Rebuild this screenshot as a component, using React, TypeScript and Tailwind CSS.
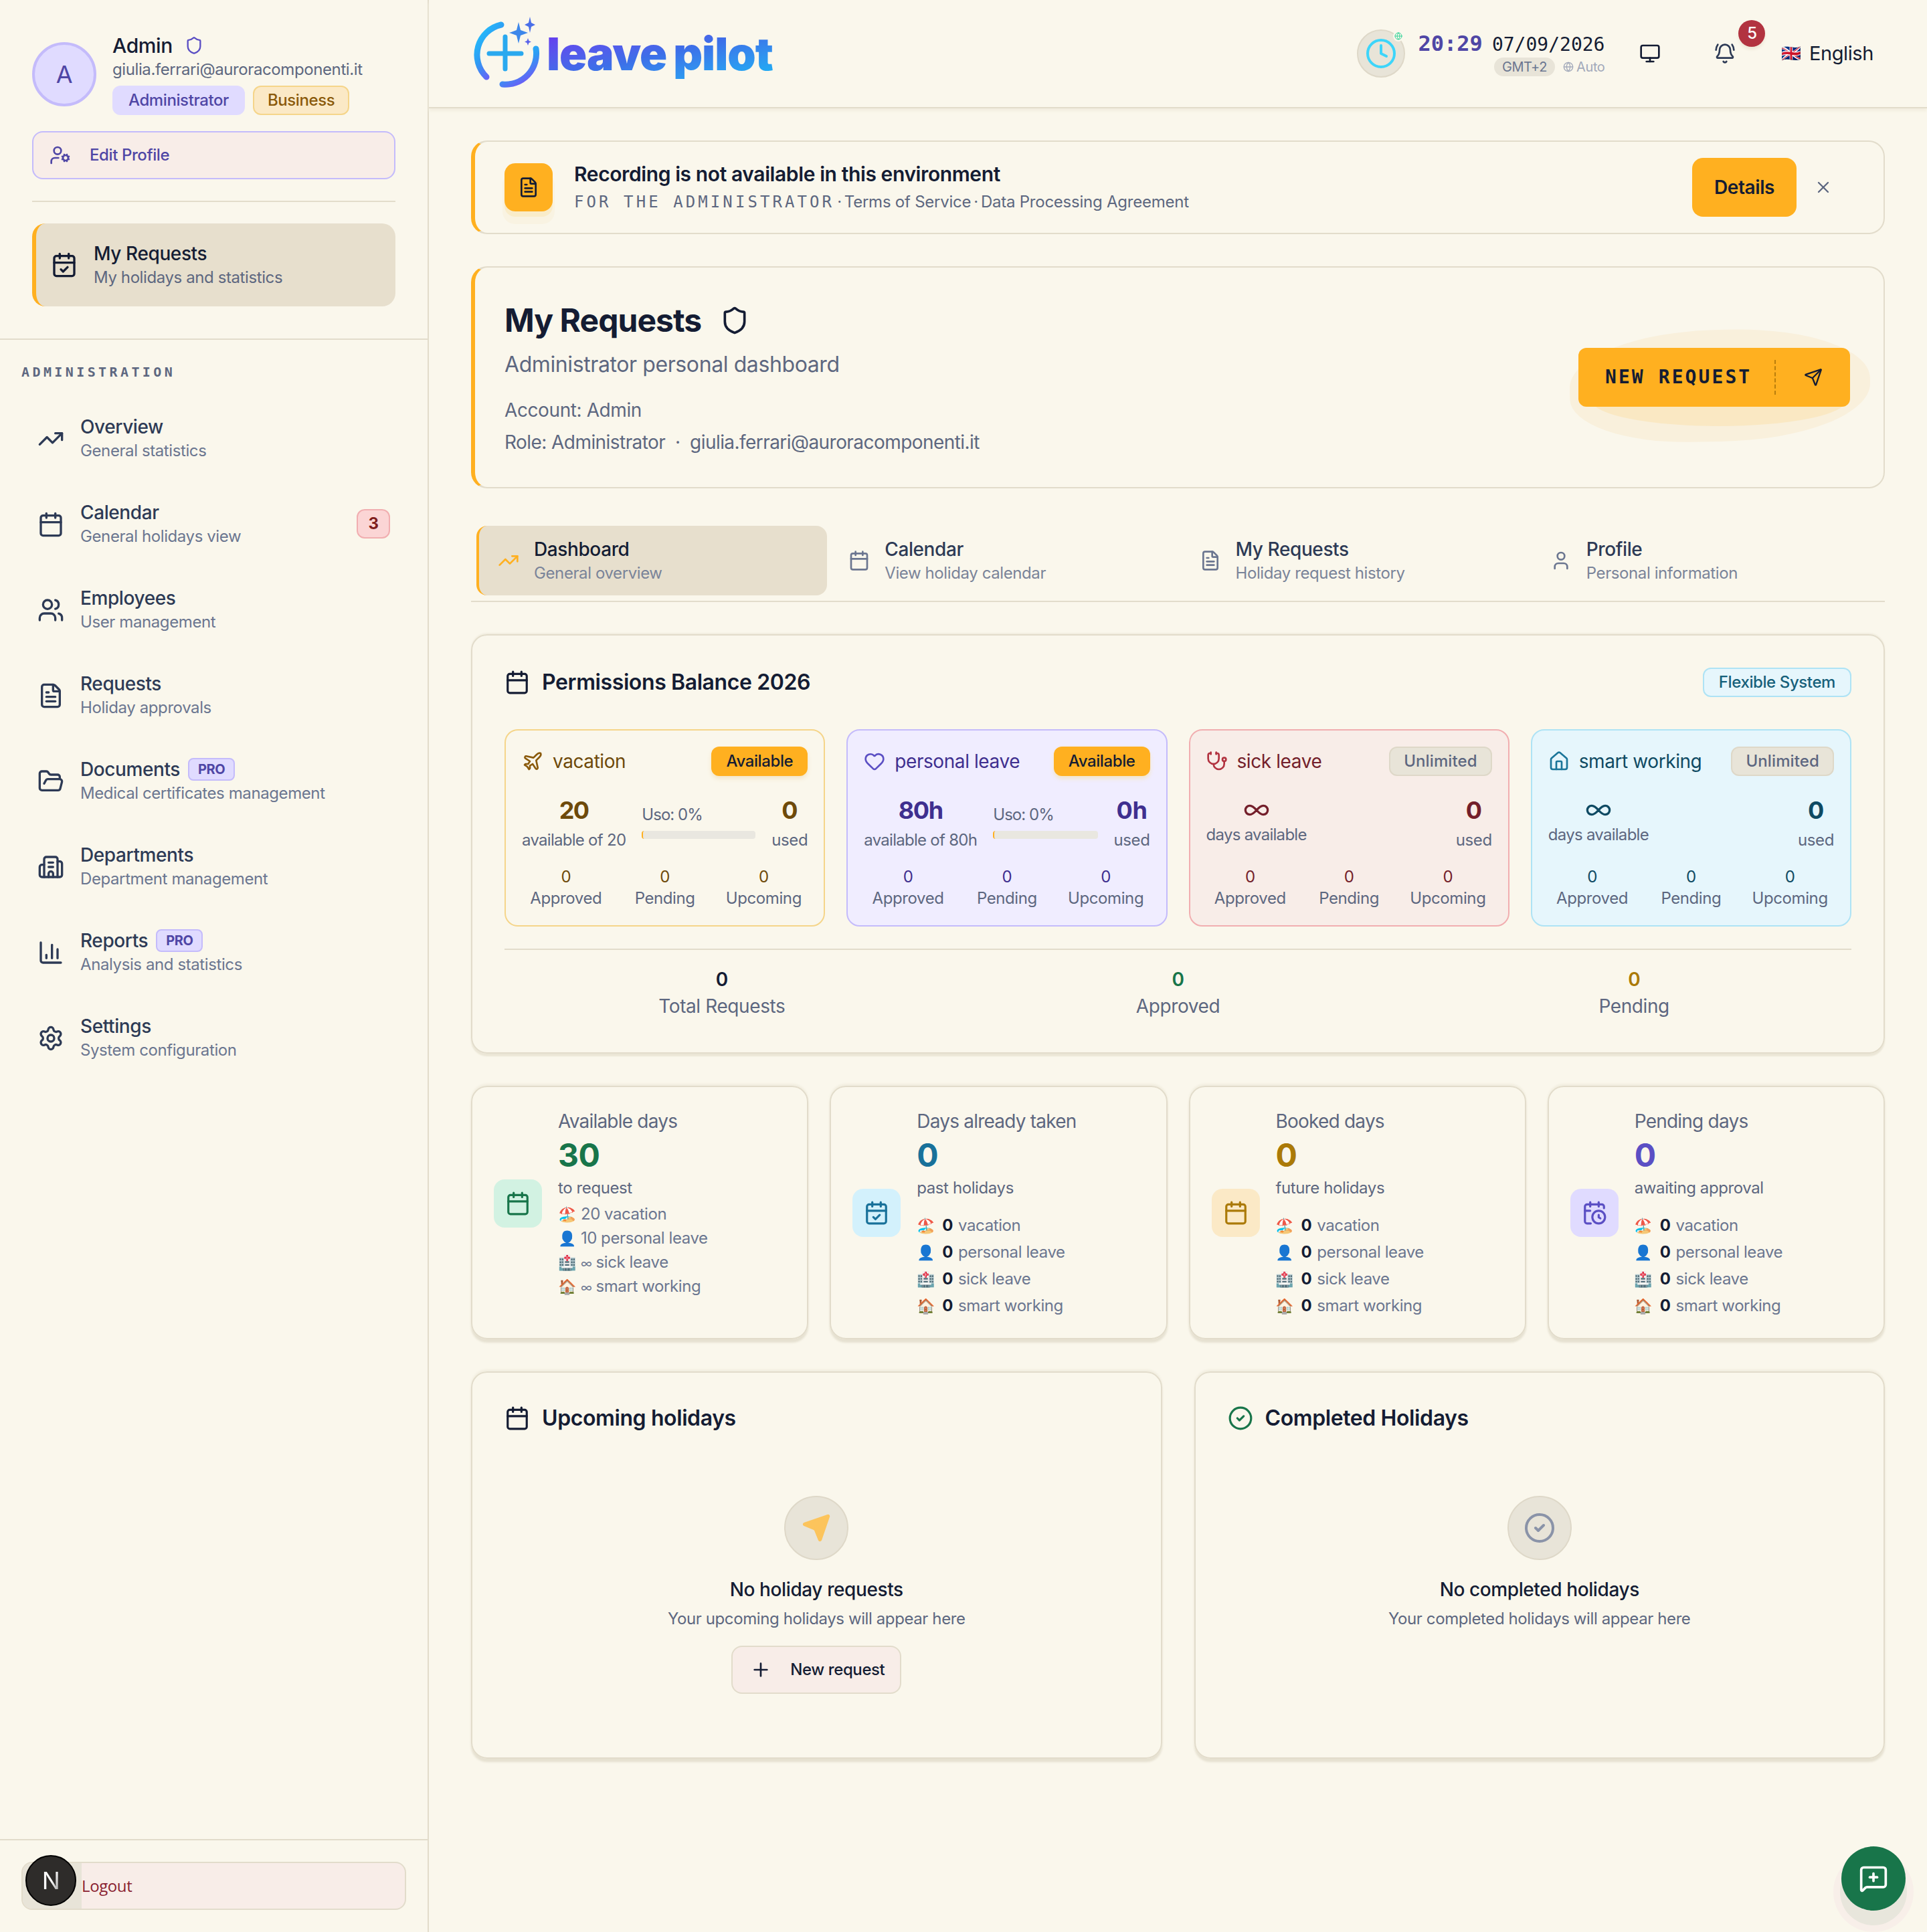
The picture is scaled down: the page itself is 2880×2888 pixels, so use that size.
import {
  Shield, UserCog, CalendarCheck, TrendingUp, Calendar, Users, FileText, FolderOpen, Building2,
  ChartColumn, Settings, Plane, Heart, Stethoscope, House, Infinity as InfinityIcon, Monitor,
  BellRing, Globe, Clock, X, Send, Plus, CircleCheck, MessageSquarePlus, LogOut, User, CalendarClock,
} from "lucide-react";

const navItems = [
  { icon: TrendingUp, title: "Overview", sub: "General statistics" },
  { icon: Calendar, title: "Calendar", sub: "General holidays view", count: "3" },
  { icon: Users, title: "Employees", sub: "User management" },
  { icon: FileText, title: "Requests", sub: "Holiday approvals" },
  { icon: FolderOpen, title: "Documents", sub: "Medical certificates management", pro: true },
  { icon: Building2, title: "Departments", sub: "Department management" },
  { icon: ChartColumn, title: "Reports", sub: "Analysis and statistics", pro: true },
  { icon: Settings, title: "Settings", sub: "System configuration" },
];

const tabs = [
  { icon: TrendingUp, title: "Dashboard", sub: "General overview", active: true },
  { icon: Calendar, title: "Calendar", sub: "View holiday calendar" },
  { icon: FileText, title: "My Requests", sub: "Holiday request history" },
  { icon: User, title: "Profile", sub: "Personal information" },
];

const leaves = [
  { icon: Plane, name: "vacation", badge: "Available", left: "20", leftSub: "available of 20", used: "0", box: "bg-[#faf7ec] border-[#f5d58a]", text: "text-[#6e4a0a]", iconColor: "text-[#8a5a0b]" },
  { icon: Heart, name: "personal leave", badge: "Available", left: "80h", leftSub: "available of 80h", used: "0h", box: "bg-[#f0edff] border-[#c4bbfb]", text: "text-[#3f2f8f]", iconColor: "text-[#5b4fc4]" },
  { icon: Stethoscope, name: "sick leave", badge: "Unlimited", left: null, leftSub: "days available", used: "0", box: "bg-[#f8ede8] border-[#f1aeb0]", text: "text-[#741f2b]", iconColor: "text-[#b23340]" },
  { icon: House, name: "smart working", badge: "Unlimited", left: null, leftSub: "days available", used: "0", box: "bg-[#e6f6fc] border-[#aee3f5]", text: "text-[#0f4a63]", iconColor: "text-[#1a7599]" },
];

const kinds = [
  { emoji: "🏖️", name: "vacation" },
  { emoji: "👤", name: "personal leave" },
  { emoji: "🏥", name: "sick leave" },
  { emoji: "🏠", name: "smart working" },
];

const stats = [
  { icon: Calendar, title: "Available days", value: "30", sub: "to request", box: "bg-[#d2f2e2]", color: "text-[#18754a]", values: ["20", "10", "∞", "∞"] },
  { icon: CalendarCheck, title: "Days already taken", value: "0", sub: "past holidays", box: "bg-[#d3f1fc]", color: "text-[#18719a]" },
  { icon: Calendar, title: "Booked days", value: "0", sub: "future holidays", box: "bg-[#fbe9c6]", color: "text-[#ab7a08]", grid: true },
  { icon: CalendarClock, title: "Pending days", value: "0", sub: "awaiting approval", box: "bg-[#e0dbff]", color: "text-[#5b4fc4]" },
];

const muted = "text-[#5d6780]";
const mono = "font-['DejaVu_Sans_Mono',monospace]";

function Logo() {
  return (
    <div className="flex items-center">
      <svg width="110" height="110" viewBox="0 0 110 110" className="shrink-0">
        <defs>
          <linearGradient id="ring" x1="0" y1="0" x2="0.6" y2="1">
            <stop offset="0" stopColor="#1fc8fd" />
            <stop offset="0.55" stopColor="#2f9bf3" />
            <stop offset="1" stopColor="#6c5cf6" />
          </linearGradient>
        </defs>
        <path d="M50 12 A46 46 0 0 0 28 90" fill="none" stroke="url(#ring)" strokeWidth="9" strokeLinecap="round" />
        <path d="M102 48 A46 46 0 0 1 52 101" fill="none" stroke="url(#ring)" strokeWidth="9" strokeLinecap="round" />
        <path d="M32 55 H80 M56 30 V78" stroke="#2aa9ef" strokeWidth="7" strokeLinecap="round" />
        <path d="M76 8 L79 20 L90 24 L79 28 L76 40 L73 28 L62 24 L73 20 Z" fill="#3d87ea" />
        <path d="M93 0 L95 9 L101 12 L95 15 L93 24 L91 15 L85 12 L91 9 Z" fill="#4a6fe8" />
        <path d="M90 32 L91.5 36 L95 37.5 L91.5 39 L90 43 L88.5 39 L85 37.5 L88.5 36 Z" fill="#5a63ea" />
      </svg>
      <div className="ml-[8px] flex gap-[10px] bg-gradient-to-br from-[#6a2ff0] via-[#3d6ee8] to-[#12b5f5] bg-clip-text font-['Inter',sans-serif] text-[68px] leading-[76px] font-black tracking-[-0.015em] text-transparent">
        <span>leave</span>
        <span>pilot</span>
      </div>
    </div>
  );
}

function Sidebar() {
  return (
    <aside className="flex w-[641px] shrink-0 flex-col border-r-2 border-[#e2dccb]">
      <div className="flex flex-col border-b-2 border-[#e2dccb] px-12 pt-[50px] pb-[48px]">
        <div className="flex items-center gap-6">
          <div className="flex h-[96px] w-[96px] shrink-0 items-center justify-center rounded-full border-4 border-[#c4bbfb] bg-[#e0dbff] text-[36px] text-[#4f46a5]">A</div>
          <div>
            <div className="flex h-[36px] items-center gap-[18px] text-[30px] font-medium text-[#141c33]">
              Admin <Shield size={28} className="text-[#5b4fc4]" />
            </div>
            <div className={`mt-[2px] text-[24px] leading-[32px] ${muted}`}>giulia.ferrari@auroracomponenti.it</div>
            <div className="mt-[8px] flex gap-3">
              <span className="flex h-[44px] items-center rounded-[12px] bg-[#e0dbff] px-[24px] text-[24px] font-medium text-[#4f46a5]">Administrator</span>
              <span className="flex h-[44px] items-center rounded-[12px] border-2 border-[#f5d58a] bg-[#fbe9c6] px-[20px] text-[24px] font-medium text-[#8a5a0b]">Business</span>
            </div>
          </div>
        </div>
        <button className="mt-6 flex h-[72px] items-center gap-[28px] rounded-[16px] border-2 border-[#c4bbfb] bg-[#f8ede8] pl-[24px] text-[24px] font-medium text-[#4f46a5]">
          <UserCog size={32} /> Edit Profile
        </button>
        <div className="mt-8 h-[2px] bg-[#e2dccb]" />
        <div className="mt-8 flex h-[124px] items-center gap-[24px] rounded-[20px] border-l-[6px] border-[#ffb020] bg-[#e7dfcd] pl-[22px]">
          <CalendarCheck size={40} className="text-[#141c33]" />
          <div className="pt-[2px]">
            <div className="text-[28px] leading-[36px] font-medium text-[#141c33]">My Requests</div>
            <div className={`text-[24px] leading-[36px] ${muted}`}>My holidays and statistics</div>
          </div>
        </div>
      </div>

      <div className="flex flex-1 flex-col px-8 pt-[36px]">
        <div className={`${mono} text-[20px] leading-[24px] font-bold tracking-[0.22em] ${muted}`}>ADMINISTRATION</div>
        <nav className="mt-[32px] flex flex-col gap-4">
          {navItems.map((item) => (
            <div key={item.title} className="flex h-[112px] items-center gap-6 px-6">
              <item.icon size={40} className="shrink-0 text-[#2d3a55]" />
              <div className="flex-1">
                <div className="flex items-center gap-3 text-[28px] leading-[36px] font-medium text-[#2d3a55]">
                  {item.title}
                  {item.pro && (
                    <span className="flex h-[34px] w-[70px] items-center justify-center rounded-[8px] border-2 border-[#c4bbfb] bg-[#e0dbff] text-[20px] font-bold text-[#4f46a5]">PRO</span>
                  )}
                </div>
                <div className="text-[24px] leading-[36px] text-[#6b7690]">{item.sub}</div>
              </div>
              {item.count && (
                <span className="mb-[2px] flex h-[44px] w-[50px] items-center justify-center rounded-[12px] border-2 border-[#f1aeb0] bg-[#fbd5d5] text-[24px] font-bold text-[#7f1d1d]">{item.count}</span>
              )}
            </div>
          ))}
        </nav>
      </div>

      <div className="border-t-2 border-[#e2dccb] px-8 pt-[32px] pb-[33px]">
        <div className="flex h-[72px] items-center overflow-hidden rounded-[16px] border-2 border-[#e2dccb] bg-[#f8ede8] font-['Open_Sans',sans-serif] text-[24px] text-[#8a2231]">
          <span className="flex h-full w-[88px] items-center justify-center bg-[#e8e4d8]">
            <LogOut size={32} />
          </span>
          Logout
        </div>
      </div>
    </aside>
  );
}

function Header() {
  return (
    <header className="flex h-[162px] items-center justify-between border-b-2 border-[#e2dccb] pr-[80px] pl-[58px] shadow-[0_4px_4px_#f2eee0]">
      <Logo />
      <div className="flex items-center">
        <div className="relative flex h-[72px] w-[72px] items-center justify-center rounded-full border-2 border-[#ded8c8] bg-[#e8e4d8]">
          <Clock size={48} className="text-[#3dd5fa]" />
          <span className="absolute top-0 right-0 flex h-[16px] w-[16px] items-center justify-center rounded-full bg-[#faf7ec]">
            <Globe size={12} className="text-[#34d399]" />
          </span>
        </div>
        <div className="ml-5">
          <div className={`flex items-baseline gap-[14px] tracking-normal ${mono}`}>
            <span className="text-[32px] leading-[40px] font-bold text-[#4f46a5]">20:29</span>
            <span className="text-[28px] leading-[40px] text-[#141c33]">07/09/2026</span>
          </div>
          <div className="mt-[-2px] flex items-center justify-end gap-3">
            <span className="flex h-[28px] items-center rounded-full bg-[#e8e4d8] px-[12px] text-[20px] text-[#6b7690]">GMT+2</span>
            <span className="flex items-center gap-[4px] text-[20px] text-[#a2a9ba]">
              <Globe size={16} /> Auto
            </span>
          </div>
        </div>
        <Monitor size={32} className="ml-[52px] text-[#141c33]" />
        <div className="relative ml-[80px]">
          <BellRing size={32} className="text-[#2d3a55]" />
          <span className="absolute top-[-34px] left-[36px] flex h-[40px] w-[40px] items-center justify-center rounded-full bg-[#b23340] text-[24px] font-medium text-white shadow-[0_4px_4px_#eee8d8]">5</span>
        </div>
        <span className="ml-[68px] text-[24px]">🇬🇧</span>
        <span className="ml-[12px] text-[29px] text-[#141c33]">English</span>
      </div>
    </header>
  );
}

function Banner() {
  return (
    <div className="flex h-[140px] items-center rounded-[24px] border-2 border-l-[6px] border-[#e2dccb] border-l-[#ffb020] pr-[76px] pl-[44px]">
      <div className="flex h-[72px] w-[72px] items-center justify-center rounded-[16px] bg-[#ffb020] shadow-[0_8px_0_0_#f9ecca,0_16px_0_3px_#f9f3e2]">
        <FileText size={32} className="text-[#141c33]" />
      </div>
      <div className="ml-8 flex-1">
        <div className="text-[30px] leading-[36px] font-semibold text-[#141c33]">Recording is not available in this environment</div>
        <div className={`mt-[8px] flex items-center text-[24px] leading-[32px] tracking-[-0.01em] ${muted}`}>
          <span className={`${mono} tracking-[0.17em]`}>FOR THE ADMINISTRATOR</span>
          <span className="mx-[4px]">·</span>Terms of Service<span className="mx-[4px]">·</span>Data Processing Agreement
        </div>
      </div>
      <button className="flex h-[88px] w-[156px] items-center justify-center rounded-[16px] bg-[#ffb020] text-[28px] font-semibold text-[#141c33]">Details</button>
      <X size={28} className={`ml-[26px] ${muted}`} />
    </div>
  );
}

function Hero() {
  return (
    <div className="flex h-[332px] items-center justify-between rounded-[24px] border-2 border-l-[6px] border-[#e2dccb] border-l-[#ffb020] pr-[50px] pl-[44px]">
      <div className="pt-[4px]">
        <div className="flex items-center gap-[28px] text-[48px] leading-[64px] font-bold tracking-[-0.02em] text-[#141c33]">
          My Requests <Shield size={44} strokeWidth={2} />
        </div>
        <div className={`mt-[10px] text-[32px] leading-[48px] ${muted}`}>Administrator personal dashboard</div>
        <div className={`mt-[20px] text-[28px] leading-[48px] ${muted}`}>Account: Admin</div>
        <div className={`text-[28px] leading-[48px] tracking-[-0.02em] ${muted}`}>Role: Administrator &nbsp;·&nbsp; giulia.ferrari@auroracomponenti.it</div>
      </div>
      <div className="relative">
        {/* soft amber smear behind the button */}
        <div className="absolute top-[-27px] right-[-30px] bottom-[-52px] left-[-13px] rotate-[-1deg] rounded-[50%_45%_50%_40%] bg-[#f9f0dc]" />
        <div className="absolute top-[40px] right-[6px] bottom-[-29px] left-[20px] rounded-[50%] bg-[#fae8c3]" />
        <button className={`relative flex h-[88px] w-[406px] items-center rounded-[12px] bg-[#ffb020] pl-[40px] text-[28px] font-bold tracking-[0.11em] text-[#141c33] ${mono}`}>
          NEW REQUEST
          <span className="ml-[34px] h-[52px] border-l-2 border-dashed border-[#b97d0c]" />
          <Send size={28} className="ml-[42px]" />
        </button>
      </div>
    </div>
  );
}

function Tabs() {
  return (
    <div className="flex gap-1 border-b-2 border-[#e2dccb] px-2 pt-2 pb-2">
      {tabs.map((tab) => (
        <div key={tab.title} className={`flex h-[104px] flex-1 items-center gap-[22px] rounded-[16px] pl-[28px] ${tab.active ? "border-l-4 border-[#ffb020] bg-[#e7dfcd] pl-6" : ""}`}>
          <tab.icon size={32} className={tab.active ? "text-[#ffb020]" : "text-[#6b7690]"} />
          <div className="pt-[2px]">
            <div className={`text-[28px] leading-[36px] font-medium ${tab.active ? "text-[#141c33]" : "text-[#2d3a55]"}`}>{tab.title}</div>
            <div className="text-[24px] leading-[36px] text-[#7a8499]">{tab.sub}</div>
          </div>
        </div>
      ))}
    </div>
  );
}

function LeaveCard({ leave }: { leave: (typeof leaves)[number] }) {
  return (
    <div className={`rounded-[20px] border-2 px-6 pt-6 pb-6 ${leave.box}`}>
      <div className="flex h-[44px] items-center">
        <leave.icon size={32} className={leave.iconColor} />
        <span className={`ml-[14px] flex-1 text-[28px] tracking-[-0.015em] ${leave.text}`}>{leave.name}</span>
        {leave.badge === "Available" ? (
          <span className="flex h-[44px] items-center rounded-[12px] bg-[#ffb020] px-[22px] text-[24px] font-medium text-[#141c33] shadow-[0_4px_6px_#f3e6c8]">Available</span>
        ) : (
          <span className={`flex h-[44px] items-center rounded-[12px] border-2 border-[#ded8c8] bg-[#e8e4d8] px-[20px] text-[24px] font-medium tracking-[0.005em] ${muted}`}>Unlimited</span>
        )}
      </div>
      <div className="mt-[27px] flex h-[85px] gap-6">
        <div className="text-center">
          {leave.left ? (
            <div className={`text-[36px] leading-[48px] font-bold tracking-[-0.04em] ${leave.text}`}>{leave.left}</div>
          ) : (
            <InfinityIcon size={40} className={`mx-auto mt-[4px] ${leave.text}`} />
          )}
          <div className={`text-[24px] leading-[32px] tracking-[-0.03em] ${muted} ${leave.left ? "mt-[5px]" : "mt-[1px]"}`}>{leave.leftSub}</div>
        </div>
        <div className="flex-1 pt-[15px]">
          {leave.left && (
            <>
              <div className={`text-[24px] leading-[32px] tracking-[-0.04em] ${muted}`}>Uso: 0%</div>
              <div className="mt-[8px] h-[12px] rounded-[4px] border-l-2 border-[#ffb020] bg-[#e9e7e0]" />
            </>
          )}
        </div>
        <div className="text-center">
          <div className={`text-[36px] leading-[48px] font-bold ${leave.text}`}>{leave.used}</div>
          <div className={`mt-[5px] text-[24px] leading-[32px] ${muted}`}>used</div>
        </div>
      </div>
      <div className="mt-[23px] grid grid-cols-3 gap-4 text-center">
        {["Approved", "Pending", "Upcoming"].map((label) => (
          <div key={label}>
            <div className={`text-[24px] leading-[32px] ${leave.text}`}>0</div>
            <div className={`text-[24px] leading-[32px] ${muted}`}>{label}</div>
          </div>
        ))}
      </div>
    </div>
  );
}

function Balance() {
  return (
    <div className="rounded-[24px] border-2 border-[#e2dccb] px-12 pt-12 pb-[49px] shadow-[0_-2px_2px_#f2eee0,0_4px_2px_#ebe6d6]">
      <div className="flex h-[44px] items-center justify-between">
        <div className="flex items-center gap-[18px] text-[32px] font-semibold text-[#141c33]">
          <Calendar size={38} /> Permissions Balance 2026
        </div>
        <span className="flex h-[44px] items-center rounded-[12px] border-2 border-[#aee3f5] bg-[#e6f6fc] px-[22px] text-[24px] font-medium text-[#16607a]">Flexible System</span>
      </div>
      <div className="mt-12 grid grid-cols-4 gap-8">
        {leaves.map((leave) => (
          <LeaveCard key={leave.name} leave={leave} />
        ))}
      </div>
      <div className="mt-[33px] grid grid-cols-3 gap-8 border-t-2 border-[#e2dccb] pt-[24px] text-center">
        {[
          { label: "Total Requests", color: "text-[#141c33]" },
          { label: "Approved", color: "text-[#18754a]" },
          { label: "Pending", color: "text-[#ab7a08]" },
        ].map((s) => (
          <div key={s.label}>
            <div className={`text-[28px] leading-[40px] font-semibold ${s.color}`}>0</div>
            <div className={`text-[28px] leading-[40px] ${muted}`}>{s.label}</div>
          </div>
        ))}
      </div>
    </div>
  );
}

function StatCard({ stat }: { stat: (typeof stats)[number] }) {
  return (
    <div className="h-[379px] rounded-[24px] border-2 border-[#e2dccb] pt-[31px] pl-[32px] shadow-[0_-3px_3px_#f2eee0,0_5px_3px_#e6e1d1]">
      <div className="flex items-center gap-6">
        <div className={`flex h-[72px] w-[72px] shrink-0 items-center justify-center rounded-[16px] ${stat.box}`}>
          <stat.icon size={38} className={stat.color} />
        </div>
        <div>
          <div className={`text-[28px] leading-[40px] tracking-[-0.028em] ${muted}`}>{stat.title}</div>
          <div className={`mt-[3px] text-[48px] leading-[56px] font-bold ${stat.color}`}>{stat.value}</div>
          <div className={`mt-[5px] text-[24px] leading-[32px] ${muted}`}>{stat.sub}</div>
          {stat.values ? (
            <div className="mt-[5px]">
              {kinds.map((k, i) => (
                <div key={k.name} className="flex h-[36px] items-center gap-[10px] text-[24px] text-[#6b7690]">
                  <span className="w-[24px] text-center text-[22px]">{k.emoji}</span>
                  <span className="flex items-baseline gap-[6px]">
                    <span className={stat.values[i] === "∞" ? "text-[18px]" : ""}>{stat.values[i]}</span>
                    {k.name}
                  </span>
                </div>
              ))}
            </div>
          ) : (
            <div className="mt-[22px] flex flex-col gap-1">
              {kinds.map((k) => (
                <div key={k.name} className="flex h-[36px] items-center text-[24px] text-[#6b7690]">
                  <span className="w-[24px] text-center text-[22px]">{k.emoji}</span>
                  <span className="ml-[14px] font-bold text-[#141c33]">0</span>
                  <span className="ml-[8px]">{k.name}</span>
                </div>
              ))}
            </div>
          )}
        </div>
      </div>
    </div>
  );
}

function EmptyCard({ done }: { done?: boolean }) {
  return (
    <div className="h-[579px] rounded-[24px] border-2 border-[#e2dccb] px-12 pt-12 shadow-[0_-3px_3px_#f2eee0,0_5px_3px_#e6e1d1]">
      <div className="flex h-[40px] items-center gap-[18px] text-[32px] font-semibold text-[#141c33]">
        {done ? <CircleCheck size={38} className="text-[#18754a]" /> : <Calendar size={38} />}
        {done ? "Completed Holidays" : "Upcoming holidays"}
      </div>
      <div className="mt-[96px] flex flex-col items-center">
        <div className="flex h-[96px] w-[96px] items-center justify-center rounded-full border-2 border-[#ded8c8] bg-[#e8e4d8]">
          {done ? <CircleCheck size={48} className="text-[#8a93a8]" /> : <Send size={44} className="fill-[#fcc45c] text-[#fcc45c]" />}
        </div>
        <div className="mt-6 text-[28px] leading-[40px] font-medium text-[#141c33]">{done ? "No completed holidays" : "No holiday requests"}</div>
        <div className={`mt-2 text-[24px] leading-[32px] ${muted}`}>{done ? "Your completed holidays will appear here" : "Your upcoming holidays will appear here"}</div>
        {!done && (
          <button className="mt-6 flex h-[72px] w-[254px] items-center rounded-[16px] border-2 border-[#e2dccb] bg-[#f8ede8] pl-[26px] text-[24px] font-medium text-[#141c33]">
            <Plus size={32} />
            <span className="ml-[28px]">New request</span>
          </button>
        )}
      </div>
    </div>
  );
}

export default function App() {
  return (
    <div className="relative flex h-[2888px] overflow-hidden bg-[#faf7ec] font-['Inter','Noto_Color_Emoji',sans-serif] tracking-[-0.025em] text-[#141c33]">
      <Sidebar />
      <main className="min-w-0 flex-1">
        <Header />
        <div className="flex flex-col gap-12 px-[63px] pt-[48px]">
          <Banner />
          <Hero />
          <Tabs />
          <Balance />
          <div className="grid grid-cols-4 gap-8">
            {stats.map((stat) => (
              <StatCard key={stat.title} stat={stat} />
            ))}
          </div>
          <div className="grid grid-cols-2 gap-12">
            <EmptyCard />
            <EmptyCard done />
          </div>
        </div>
      </main>

      {/* dev indicator over the logout button */}
      <div className="absolute top-[2773px] left-[38px] flex h-[76px] w-[76px] items-center justify-center rounded-full border-2 border-black bg-[#2e2c2a] text-[36px] font-normal text-white">
        <span className="bg-gradient-to-br from-white via-white to-[#8a8a8a] bg-clip-text text-transparent">N</span>
      </div>

      <button className="absolute top-[2760px] left-[2752px] flex h-[96px] w-[96px] items-center justify-center rounded-full bg-[#18754a] text-white shadow-[0_20px_0_2px_#e8e6dc,0_20px_0_12px_#f8efe9]">
        <MessageSquarePlus size={44} />
      </button>
    </div>
  );
}
